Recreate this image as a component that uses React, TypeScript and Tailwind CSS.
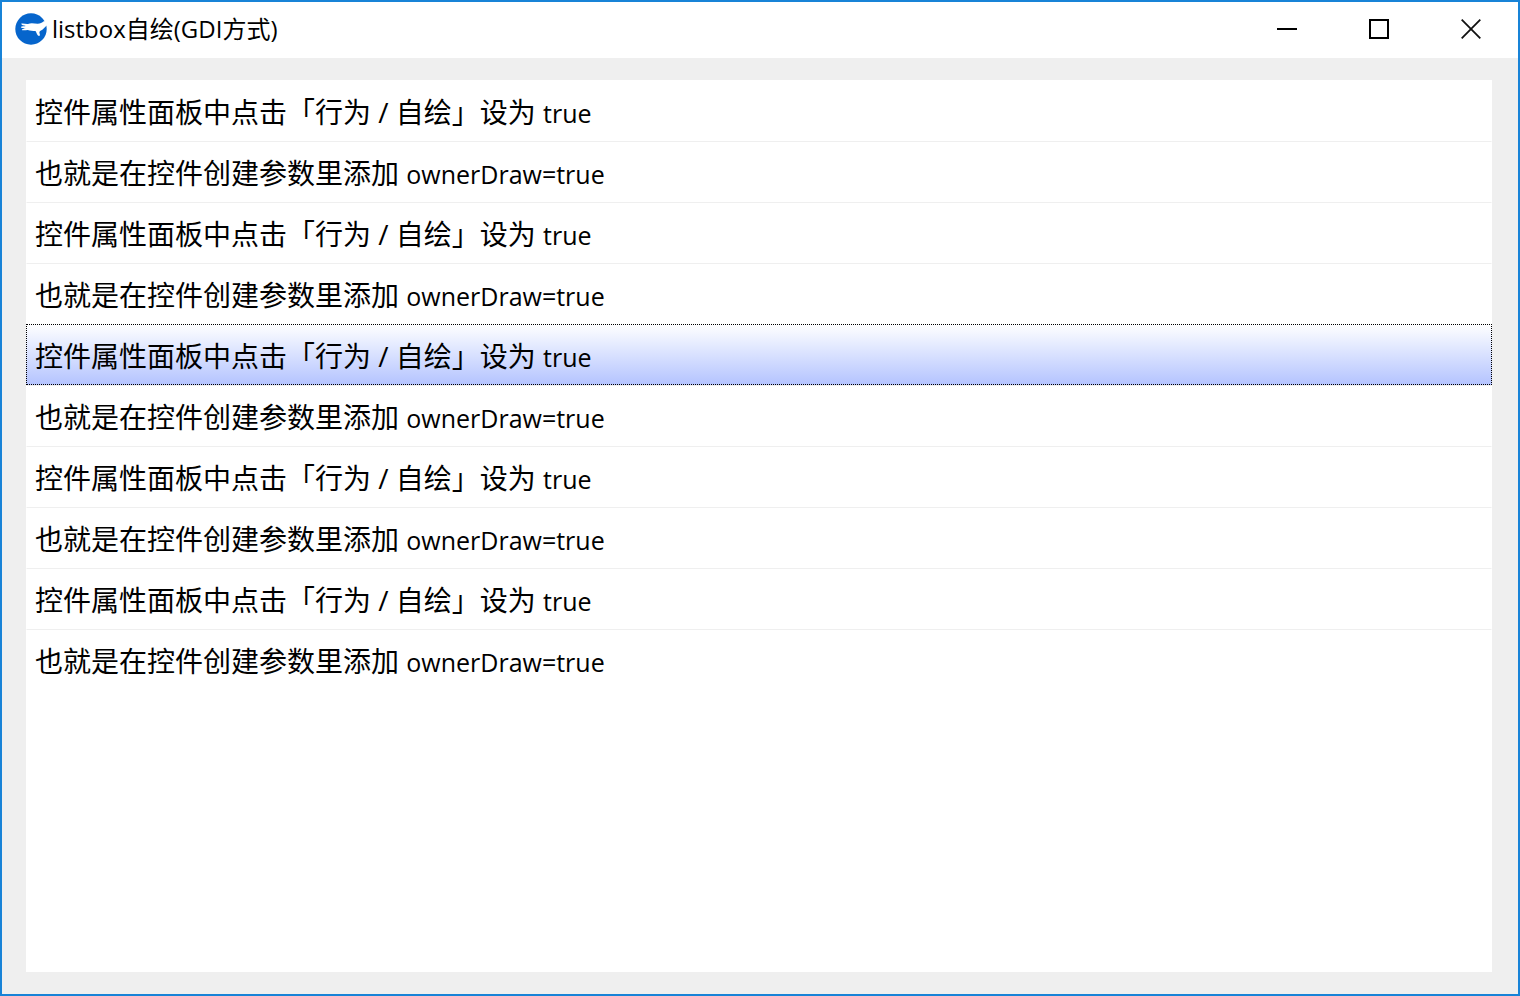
import { JSX, useState } from 'react';

interface IListItem {
  id: number;
  text: string;
  code: string;
}

const behaviour = { text: '控件属性面板中点击「行为 / 自绘」设为 ', code: 'true' };
const createParam = { text: '也就是在控件创建参数里添加 ', code: 'ownerDraw=true' };

const items: IListItem[] = Array.from({ length: 10 }, (_, id) => ({
  id,
  ...(id % 2 ? createParam : behaviour),
}));

function AppIcon(): JSX.Element {
  return (
    <svg className="size-8 shrink-0" viewBox="0 0 32 32" aria-hidden="true">
      <circle cx="16" cy="16" r="15.7" fill="#0665cc" />
      <path
        fill="#fff"
        d="M28.800 8.300 C27 9.800 25 10.900 22.500 10.800 C19.500 10.500 16 9.700 13 10.900 C10.500 11.100 7.500 10.100 6.200 10.800 C6.200 12.100 8.800 12.500 10.800 13.100 C9.200 13.500 6.500 13.100 5.800 13.900 C6 15.100 8.800 15.100 10.800 15.200 C9.200 15.700 6.800 15.900 6.800 16.900 C7.500 17.800 10.800 17.100 12.800 16.900 C15.200 17.900 18 17.600 20.500 18 C21.800 19.800 22 22.400 23.900 23 C25.300 22.900 25 21.400 24.500 20.200 C24.200 19.200 24.600 18.300 25.500 17.800 C28.300 16.800 29.700 13.800 32 12.200 V8 Z"
      />
    </svg>
  );
}

function TitleBar(): JSX.Element {
  return (
    <header className="flex h-14 shrink-0 items-center justify-between bg-white pr-px pb-0.5">
      <div className="flex items-center gap-[5px] pl-[13px]">
        <AppIcon />
        <h1 className="text-2xl">listbox自绘(GDI方式)</h1>
      </div>
      <div className="flex h-full">
        <button className="flex w-[92px] items-center justify-center hover:bg-gray-200" aria-label="最小化">
          <svg className="size-5" viewBox="0 0 20 20" aria-hidden="true">
            <path d="M0 9h20v2H0z" />
          </svg>
        </button>
        <button className="flex w-[92px] items-center justify-center hover:bg-gray-200" aria-label="最大化">
          <svg className="size-5" viewBox="0 0 20 20" aria-hidden="true">
            <path d="M1 1h18v18H1z" fill="none" stroke="#000" strokeWidth="2" />
          </svg>
        </button>
        <button className="flex w-[92px] items-center justify-center hover:bg-red-500" aria-label="关闭">
          <svg className="size-5" viewBox="0 0 20 20" aria-hidden="true">
            <path d="M.7 .7l18.600 18.600M19.300 .7L.7 19.300" fill="none" stroke="#111" strokeWidth="1.800" />
          </svg>
        </button>
      </div>
    </header>
  );
}

interface ListBoxProps {
  selectedId: number;
  onSelect: (id: number) => void;
}

function ListBox({ selectedId, onSelect }: ListBoxProps): JSX.Element {
  return (
    <div role="listbox" aria-label="listbox" className="flex grow flex-col bg-white">
      {items.map(({ id, text, code }) => (
        <button
          key={id}
          role="option"
          aria-selected={id === selectedId}
          className={`flex h-[61px] items-center border px-2 pt-1 text-left whitespace-pre outline-none ${
            id === selectedId
              ? 'border-dotted border-black bg-linear-to-b from-white to-[#b4c3ff] bg-origin-border'
              : 'border-transparent border-t-[#efefef] first:border-t-transparent'
          }`}
          onClick={() => onSelect(id)}
        >
          <span className="text-[28px] leading-10">
            {text}
            <span className="text-[25px]">{code}</span>
          </span>
        </button>
      ))}
    </div>
  );
}

function App(): JSX.Element {
  const [selectedId, setSelectedId] = useState<number>(4);

  return (
    <div className="flex min-h-screen flex-col border-2 border-[#1883d7] bg-[#efefef] font-['Open_Sans','Noto_Sans_CJK_SC',sans-serif] text-black">
      <TitleBar />
      <main className="flex grow flex-col pt-[22px] pr-[26px] pb-[22px] pl-6">
        <ListBox selectedId={selectedId} onSelect={setSelectedId} />
      </main>
    </div>
  );
}

export default App;
